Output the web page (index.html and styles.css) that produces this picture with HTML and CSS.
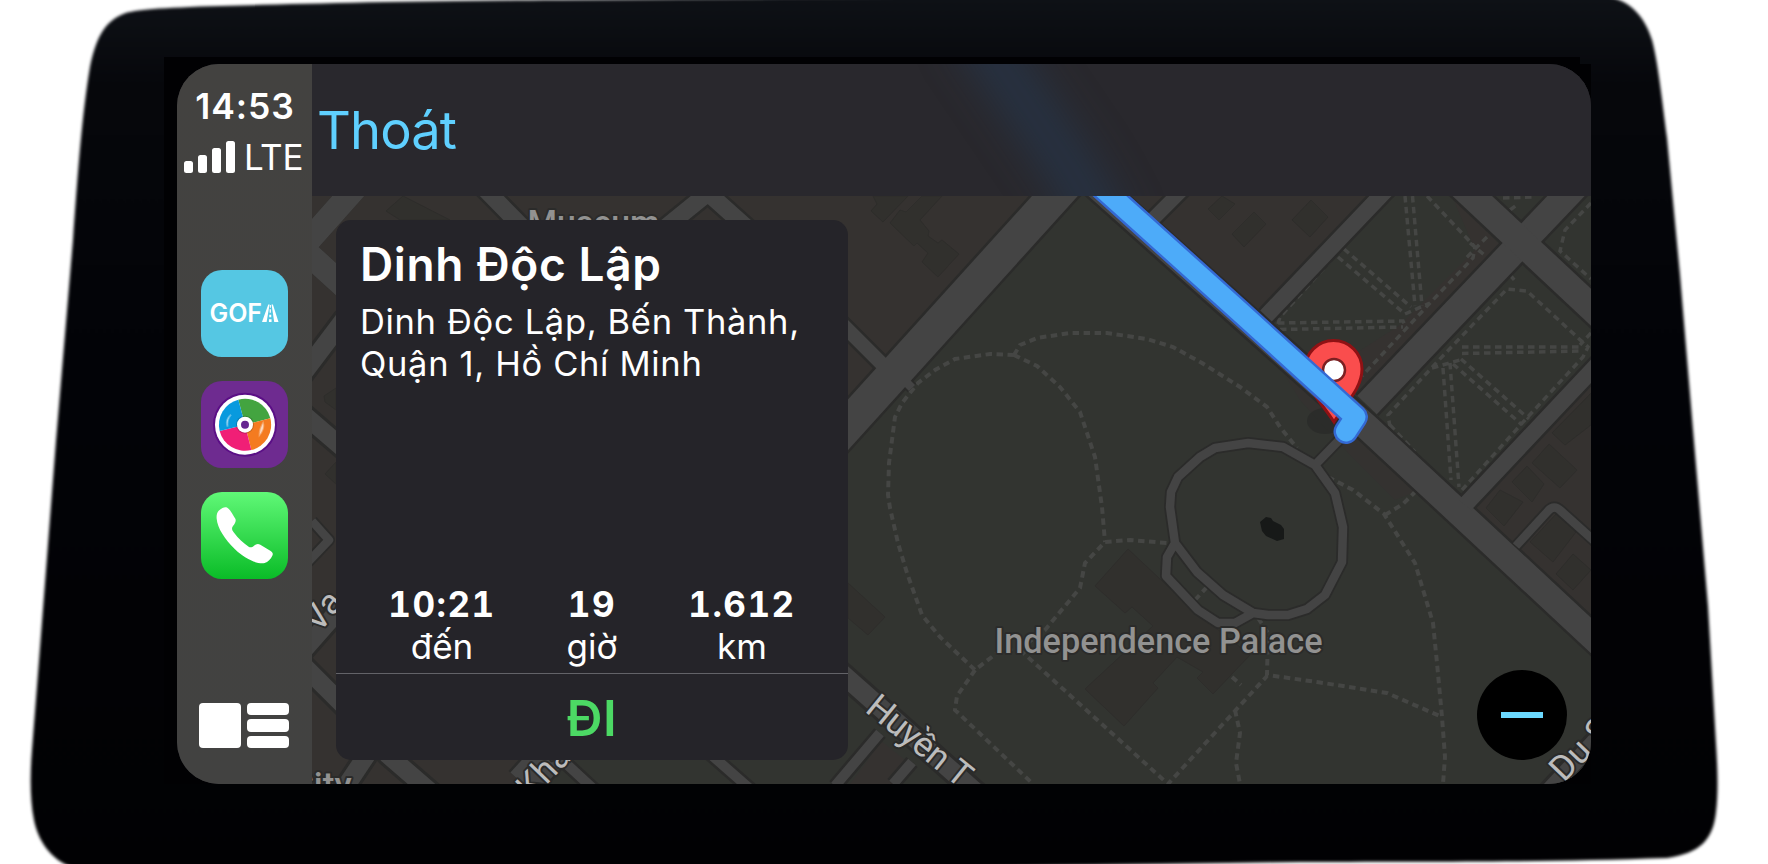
FILE: index.html
```html
<!DOCTYPE html>
<html lang="vi">
<head>
<meta charset="utf-8">
<title>Dinh Độc Lập</title>
<link rel="stylesheet" href="styles.css">
</head>
<body>
<div class="device">
  <svg class="bezel" viewBox="0 0 1768 864" aria-hidden="true">
    <defs>
      <linearGradient id="bz" x1="0" y1="0" x2="0" y2="1">
        <stop offset="0" stop-color="#0e1116"/>
        <stop offset=".1" stop-color="#06070b"/>
        <stop offset=".4" stop-color="#020307"/>
        <stop offset="1" stop-color="#010103"/>
      </linearGradient>
      <filter id="soft" x="-2%" y="-2%" width="104%" height="104%" color-interpolation-filters="sRGB"><feGaussianBlur stdDeviation="1.7"/></filter>
    </defs>
    <path filter="url(#soft)" fill="url(#bz)" d="M73 240C78 170 82 115 90 67C96 38 104 24 119 16C130 10 145 9 200 6.500C300 4 400 1 560 0L900 -3L1610 -3C1632 2 1645 18 1652 40C1658 62 1662 100 1667 138L1680 275L1693 430L1708 606L1716 744C1718 775 1718 795 1716 812C1713 840 1700 853 1667 858C1550 862 1450 862 1300 862L900 868H74C50 860 38 840 34 820C30 800 30 775 32 750L39 661L56 441Z"/>
    <path fill="#010103" d="M164 57H1580V64H1591V784H164Z"/>
  </svg>
  <main class="screen">
    <nav class="dock">
      <div class="status">
        <div class="clock">14:53</div>
        <div class="network">
          <svg class="bars" viewBox="0 0 51 32" fill="#fff"><rect y="20" width="9" height="12" rx="2.500"/><rect x="14" y="14" width="9" height="18" rx="2.500"/><rect x="28" y="7" width="9" height="25" rx="2.500"/><rect x="42" width="9" height="32" rx="2.500"/></svg>
          <span class="lte">LTE</span>
        </div>
      </div>
      <div class="apps">
        <div class="app gofa">
          <span class="gofa-name">GOF</span>
          <svg class="gofa-road" viewBox="276 162 50 54"><path fill="#fff" d="M295 163H299L290 216H276ZM305 163H309L326 216H313ZM300 165h3v8h-3zM299 178h4v10h-4zM298 194h6v8h-6zM297 208h8v8h-8z"/></svg>
        </div>
        <div class="app music">
          <svg viewBox="93 393 261 261">
            <circle cx="225" cy="524" r="96" fill="#5b0f86"/>
            <circle cx="225" cy="524" r="90" fill="#fff"/>
            <path fill="#43a440" d="M225 524L205 449A78 78 0 0 1 301 505Z"/>
            <path fill="#f47b20" d="M225 524L301 505A78 78 0 0 1 244 600Z"/>
            <path fill="#f01f76" d="M225 524L244 600A78 78 0 0 1 149 543Z"/>
            <path fill="#089ade" d="M225 524L149 543A78 78 0 0 1 205 449Z"/>
            <path d="M183 494q-14 16-10 36q-8-20 10-36zM279 520q4 16-10 34q0-16 10-34z" fill="#fff" stroke="#fff" stroke-opacity=".3" stroke-width="6" fill-opacity=".6"/>
            <circle cx="225" cy="524" r="27" fill="#000" fill-opacity=".2"/>
            <circle cx="225" cy="524" r="24" fill="#fff"/>
            <circle cx="225" cy="524" r="12" fill="#662590"/>
          </svg>
        </div>
        <div class="app phone">
          <svg viewBox="93 726 261 261"><path fill="#fff" d="M146 782C155 774 164 769 172 773C182 780 190 798 196 806C199 812 196 820 189 828C184 834 186 840 191 847C205 866 220 880 236 890C242 894 247 891 252 887C258 882 264 881 271 884L302 903C308 907 310 911 307 917C302 927 294 936 284 939C262 943 226 928 195 898C165 868 142 834 140 806C139 796 141 788 146 782Z"/></svg>
        </div>
      </div>
      <svg class="dashboard" viewBox="0 0 90 45" fill="#fff"><rect width="42" height="45" rx="4"/><rect x="48" width="42" height="12" rx="4"/><rect x="48" y="16" width="42" height="13" rx="4"/><rect x="48" y="33" width="42" height="12" rx="4"/></svg>
    </nav>
    <section class="content">
      <header class="bar">
        <svg class="glow" viewBox="312 64 1279 132"><defs><filter id="gl" x="-80%" y="-60%" width="260%" height="220%" color-interpolation-filters="sRGB"><feGaussianBlur stdDeviation="20"/></filter></defs><path d="M970 20L1075 175L1110 240" fill="none" stroke="#234263" stroke-opacity=".4" stroke-width="48" filter="url(#gl)"/></svg>
        <a class="exit">Thoát</a>
      </header>
      <div class="map-area">
        <svg class="map" viewBox="312 196 1279 588">
          <rect x="312" y="196" width="1279" height="588" fill="#323430"/>
          <!-- city blocks -->
          <g fill="#353230">
            <path d="M312 196H1055L523 784H312Z"/>
            <path d="M1108 196H1380L1262 325Z"/>
            <path d="M1470 505L1591 380V630Z"/>
            <path d="M1452 196L1500 245L1340 412L1300 375L1330 370L1400 325L1475 250Z"/>
            <path d="M1258 330L1420 490L1395 500L1350 455L1300 400Z" opacity=".7"/>
            <path d="M868 760L880 740L905 760L895 784H850Z"/>
          </g>
          <!-- buildings -->
          <g fill="#31302d" stroke="#2e2d2b" stroke-width="1">
            <path d="M1128 549L1095 586L1125 613L1132 607L1153 626L1085 689L1124 726L1158 688L1153 683L1177 657L1203 672L1197 678L1213 694L1250 655L1193 610Z"/>
            <path d="M848 583L885 617L868 635L848 618Z"/>
            <path d="M873 196L877 204L871 211L883 222L908 196ZM890 223L900 210L906 212L922 196H942L920 220L929 231L928 236L938 243L942 240L959 254L938 277L922 262L928 253L917 243L914 246Z"/>
            <path d="M1208 209L1222 196L1235 204L1219 220ZM1232 234L1254 212L1266 224L1244 247ZM1292 220L1311 200L1328 217L1310 237Z"/>
            <path d="M1552 433L1591 393V425L1565 445ZM1532 463L1549 444L1577 470L1560 488ZM1512 482L1527 466L1544 484L1532 502ZM1486 508L1500 490L1523 502L1504 526ZM1530 542L1556 514L1576 532L1553 562ZM1556 574L1573 554L1591 570L1573 590Z"/>
            <path d="M386 211L403 196L450 220H400ZM324 396L336 388V410L325 402ZM325 474L336 462V484Z"/>
          </g>
          <g class="foot">
            <path d="M1014 355L990 354L955 359L935 370L918 383L902 403L895 417L889 463L888 495L890 508L898 543L907 573L922 615L940 637L975 670L997 653L1025 645L1045 630L1080 588L1085 563L1105 542L1130 540L1167 543"/>
            <path d="M975 670L957 696L955 710L1033 784M1020 650L1168 784L1267 676"/>
            <path d="M1014 355L1037 366L1060 387L1080 412L1095 457L1102 507L1105 542"/>
            <path d="M1014 355L1020 345L1037 338L1070 333L1107 333L1147 339L1173 347L1202 363L1240 387L1267 407L1280 427L1297 448"/>
            <path d="M1328 477L1353 490L1384 514L1415 563L1433 623L1437 663L1442 717L1445 757L1443 784M1385 515L1403 504L1417 490"/>
            <path d="M1258 618L1268 633L1267 675L1317 682L1387 693L1442 717M1235 710L1240 733L1236 763L1240 784M1232 677L1241 685M1195 600L1208 586"/>
          </g>
          <g class="foot thin">
            <path d="M1278 324L1280 317L1343 247L1394 194M1427 196L1475 247L1473 258L1430 303L1362 376M1487 237L1466 258M1470 243L1488 258M1405 196L1415 306M1412.500 196L1422 306M1338 257L1405 314M1344 249L1411 307M1278 323L1403 321L1405 325M1280 329.500L1403 327M1405 314L1430 303"/>
            <path d="M1390 427L1388 415L1437 362L1507 289L1527 291L1588 347L1583 357L1525 420L1462 490M1510 275L1516 282M1462 347H1583M1462 353.500L1583 351M1453 364L1522 425M1461 359L1529 419M1443 368L1451 480M1450 363L1459 487M1390 425L1415 452M1591 333L1580 345M1432 368L1460 360"/>
            <path d="M1591 203L1565 230L1560 251L1591 279M1503 198L1533 197M1510 210L1518 204"/>
          </g>
          <!-- street casings, then street surfaces -->
          <g class="casing">
            <path d="M1073 176L523 784" stroke-width="39"/>
            <path d="M1090 180L1368 428L1611 654" stroke-width="31"/>
            <path d="M1367 405L1586 175" stroke-width="32"/>
            <path d="M1452 177L1611 326" stroke-width="32"/>
            <path d="M1390 186L1266 316M1611 350L1465 505" stroke-width="21"/>
            <path d="M1186 186L1150 222M840 322L885 367" stroke-width="19"/>
            <path d="M358 185L302 248L350 292M302 375L345 318M302 413L345 450M302 652L345 603M302 664L345 707L388 755L440 800M340 795L370 750" stroke-width="24"/>
            <path d="M482 186L530 235M650 240L708 193L766 245" stroke-width="22"/>
            <path d="M1248 443L1283 447L1315 465L1335 493L1343 527L1342 562L1325 595L1307 609L1288 615L1268 615L1253 613L1223 595L1197 572L1175 543L1170 507L1171 492L1178 477L1200 457L1215 448ZM1175 543L1167 557L1166 576L1198 610L1218 623L1235 623L1253 613M1315 465L1346 433M912 388L904 380M1516 546L1548 511Q1554 504 1561 511L1600 546M312 521L329 540L308 562" stroke-width="12"/>
            <path d="M830 663L980 796" stroke-width="25"/>
            <path d="M835 786L880 733M893 784L912 762M700 745L765 802M560 758L600 795" stroke-width="15"/>
            <path d="M1540 800L1605 730" stroke-width="22"/>
          </g>
          <g class="street">
            <path d="M1073 176L523 784" stroke-width="34"/>
            <path d="M1090 180L1368 428L1611 654" stroke-width="26"/>
            <path d="M1367 405L1586 175" stroke-width="27"/>
            <path d="M1452 177L1611 326" stroke-width="27"/>
            <path d="M1390 186L1266 316M1611 350L1465 505" stroke-width="16"/>
            <path d="M1186 186L1150 222M840 322L885 367" stroke-width="14"/>
            <path d="M358 185L302 248L350 292M302 375L345 318M302 413L345 450M302 652L345 603M302 664L345 707L388 755L440 800M340 795L370 750" stroke-width="18"/>
            <path d="M358 185L302 248L350 292" stroke-width="24"/>
            <path d="M482 186L530 235M650 240L708 193L766 245" stroke-width="17"/>
            <path d="M1248 443L1283 447L1315 465L1335 493L1343 527L1342 562L1325 595L1307 609L1288 615L1268 615L1253 613L1223 595L1197 572L1175 543L1170 507L1171 492L1178 477L1200 457L1215 448ZM1175 543L1167 557L1166 576L1198 610L1218 623L1235 623L1253 613M1315 465L1346 433M912 388L904 380M1516 546L1548 511Q1554 504 1561 511L1600 546M312 521L329 540L308 562" stroke-width="8.500"/>
            <path d="M830 663L980 796" stroke-width="19"/>
            <path d="M835 786L880 733M893 784L912 762M700 745L765 802M560 758L600 795" stroke-width="10"/>
            <path d="M1540 800L1605 730" stroke-width="16"/>
          </g>
          <path fill="#171918" d="M1260 522L1266 517L1271 518L1273 521L1281 525L1284 529V539L1277 541L1266 536L1262 531Z"/>
          <!-- labels -->
          <g class="place">
            <text x="994.500" y="652.500" textLength="328" lengthAdjust="spacingAndGlyphs">Independence Palace</text>
            <text x="527.500" y="234.500" textLength="132" lengthAdjust="spacingAndGlyphs">Museum</text>
            <text x="291" y="797">City</text>
          </g>
          <g class="road-name">
            <text transform="translate(864 711) rotate(39)" textLength="124">Huyền T</text>
            <text transform="translate(1564 783) rotate(-46)">Du S</text>
            <text transform="translate(319 634) rotate(-51)">Va</text>
            <text transform="translate(531 801) rotate(-46)">Khải</text>
          </g>
          <!-- destination pin and route -->
          <ellipse cx="1325" cy="421" rx="18" ry="13" fill="#272826" opacity=".6"/>
          <path fill="#fa4d4d" stroke="#8f1114" stroke-width="3" d="M1334 422C1322 403 1305 388 1305 369A28.500 28.500 0 0 1 1362 369C1362 388 1346 403 1334 422Z"/>
          <circle cx="1334" cy="370" r="11" fill="#fff" stroke="#7c2022" stroke-width="2.500"/>
          <g fill="none" stroke-linejoin="round" stroke-linecap="round">
            <path d="M1089 176L1240 312L1355.500 417L1346 431.500" stroke="#3469d3" stroke-width="25"/>
            <path d="M1089 176L1240 312L1355.500 417L1346 431.500" stroke="#4dabf9" stroke-width="20"/>
          </g>
        </svg>
        <article class="card">
          <h1>Dinh Độc Lập</h1>
          <p class="address">Dinh Độc Lập, Bến Thành,<br>Quận 1, Hồ Chí Minh</p>
          <div class="stats">
            <div><b>10:21</b><span>đến</span></div>
            <div><b>19</b><span>giờ</span></div>
            <div><b>1.612</b><span>km</span></div>
          </div>
          <div class="go">ĐI</div>
        </article>
        <div class="zoom-out"><i></i></div>
      </div>
    </section>
  </main>
</div>
</body>
</html>
```
FILE: styles.css
```css
* { box-sizing: border-box; margin: 0; padding: 0; }
body { background: #fff; font-family: Inter, "Noto Sans", sans-serif; color: #fff; overflow: hidden; }
.device { position: relative; width: 1768px; height: 864px; padding: 64px 177px 80px; }
.bezel { position: absolute; inset: 0; width: 100%; height: 100%; }
.screen { position: relative; display: flex; width: 1414px; height: 720px; border-radius: 42px; overflow: hidden; background: #29282d; }

.dock { display: flex; flex-direction: column; align-items: center; width: 135px; flex: none; background: linear-gradient(#434240, #424241); }
.status { width: 100%; height: 206px; padding-top: 22px; }
.clock { height: 42px; line-height: 42px; margin-bottom: 8px; padding-left: 1px; text-align: center; font-size: 35.5px; font-weight: 600; letter-spacing: .9px; }
.network { display: flex; height: 42px; padding-left: 7px; }
.bars { width: 51px; height: 32px; margin-top: 5px; flex: none; }
.lte { margin-left: 9px; line-height: 42px; font-size: 35px; font-weight: 400; letter-spacing: -.3px; }
.apps { display: flex; flex-direction: column; gap: 24px; padding-right: 1px; }
.app { display: flex; align-items: center; justify-content: center; width: 87px; height: 87px; border-radius: 21px; overflow: hidden; }
.app.music svg, .app.phone svg { width: 87px; height: 87px; }
.gofa { background: #55c7e3; }
.gofa-name { font-size: 25px; font-weight: 600; line-height: 30px; letter-spacing: 0; margin-top: -1px; }
.gofa-road { width: 16.500px; height: 18px; margin-top: -1px; }
.music { background: #6e2b90; }
.phone { background: linear-gradient(#60f877, #0abc27); }
.dashboard { width: 90px; height: 45px; margin: auto 1px 36px 0; }

.content { display: flex; flex-direction: column; flex: 1; min-width: 0; }
.bar { position: relative; height: 132px; flex: none; padding-left: 5px; background: #29282d; overflow: hidden; }
.glow { position: absolute; inset: 0; width: 1279px; height: 132px; }
.exit { position: relative; line-height: 132px; font-size: 52.5px; letter-spacing: -.9px; color: #5fd0ff; }
.map-area { position: relative; display: flex; justify-content: space-between; align-items: flex-end; flex: 1; padding: 24px; }
.map { position: absolute; inset: 0; width: 1279px; height: 588px; }
.foot path { fill: none; stroke: #454644; stroke-width: 4; stroke-dasharray: 6.500 4.500; }
.foot.thin path { stroke-width: 3.500; }
.casing path { fill: none; stroke: #2b2b2a; stroke-linejoin: round; }
.street path { fill: none; stroke: #444; stroke-linejoin: round; }
.map text { font-family: Roboto, "Noto Sans", sans-serif; font-size: 35px; paint-order: stroke; stroke: #2b2b2a; stroke-width: 4px; stroke-linejoin: round; }
.place text { fill: #929291; font-weight: 500; }
.road-name text { fill: #bcbcbc; }

.card { position: relative; display: flex; flex-direction: column; width: 512px; height: 540px; border-radius: 15px; background: #252429; }
.card h1 { padding: 17px 0 0 24px; height: 71px; line-height: 54px; font-size: 46px; font-weight: 600; letter-spacing: .65px; white-space: nowrap; }
.address { margin-top: 9.500px; padding-left: 24px; line-height: 42px; font-size: 34.5px; font-weight: 400; letter-spacing: .66px; white-space: nowrap; }
.stats { display: grid; grid-template-columns: repeat(3, 150px); justify-content: center; margin-top: auto; padding-bottom: 6.500px; text-align: center; }
.stats b, .stats span { display: block; height: 42px; line-height: 42px; font-size: 35px; }
.stats b { font-weight: 700; letter-spacing: 1.500px; font-variant-numeric: tabular-nums; }
.go { height: 87px; padding-top: 1px; border-top: 1px solid #636368; text-align: center; line-height: 86px; font-size: 49.5px; font-weight: 600; letter-spacing: .5px; color: #4cd964; }
.zoom-out { position: relative; display: flex; align-items: center; justify-content: center; width: 90px; height: 90px; border-radius: 50%; background: #000; }
.zoom-out i { width: 42px; height: 6px; background: #6bd9ff; }
```
